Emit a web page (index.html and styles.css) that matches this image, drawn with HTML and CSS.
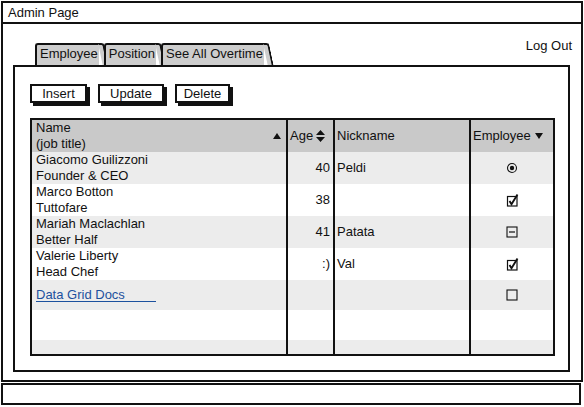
FILE: index.html
```html
<!DOCTYPE html>
<html>
<head>
<meta charset="utf-8">
<link rel="stylesheet" href="styles.css">
</head>
<body>
<div class="window">
  <div class="titlebar">Admin Page</div>
  <div class="content">
    <div class="topbar">
      <div class="tabs">
        <div class="tab">Employee</div>
        <div class="tab">Position</div>
        <div class="tab">See All Overtime</div>
      </div>
      <div class="logout">Log Out</div>
    </div>
    <div class="panel">
      <div class="buttons">
        <button class="btn btn-insert">Insert</button>
        <button class="btn btn-update">Update</button>
        <button class="btn btn-delete">Delete</button>
      </div>
      <div class="grid">
        <div class="row head">
          <div class="cell c-name head-name">
            <span>Name<br>(job title)</span>
            <svg class="tri" width="8" height="6" viewBox="0 0 8 6"><path d="M0 6L4 0L8 6Z"/></svg>
          </div>
          <div class="cell c-age head-age">
            <span>Age</span>
            <svg class="tri" width="9" height="12" viewBox="0 0 9 12"><path d="M0 5L4.5 0L9 5Z M0 7L9 7L4.5 12Z"/></svg>
          </div>
          <div class="cell c-nick head-plain">Nickname</div>
          <div class="cell c-emp head-emp">
            <span>Employee</span>
            <svg class="tri" width="8" height="6" viewBox="0 0 8 6"><path d="M0 0L8 0L4 6Z"/></svg>
          </div>
        </div>
        <div class="row alt">
          <div class="cell c-name">Giacomo Guilizzoni<br>Founder &amp; CEO</div>
          <div class="cell c-age num">40</div>
          <div class="cell c-nick nick">Peldi</div>
          <div class="cell c-emp ico">
            <svg width="12" height="12" viewBox="0 0 12 12"><circle cx="6" cy="6" r="4.5" fill="none" stroke="#111" stroke-width="1.1"/><circle cx="6" cy="6" r="2.2" fill="#111"/></svg>
          </div>
        </div>
        <div class="row">
          <div class="cell c-name">Marco Botton<br>Tuttofare</div>
          <div class="cell c-age num">38</div>
          <div class="cell c-nick nick"></div>
          <div class="cell c-emp ico">
            <svg width="13" height="13" viewBox="0 0 13 13"><rect x="1.5" y="2.5" width="9.5" height="9.5" fill="none" stroke="#111" stroke-width="1.2"/><path d="M3.5 7L5.5 10.2L11.5 0.5" fill="none" stroke="#111" stroke-width="1.9"/></svg>
          </div>
        </div>
        <div class="row alt">
          <div class="cell c-name">Mariah Maclachlan<br>Better Half</div>
          <div class="cell c-age num">41</div>
          <div class="cell c-nick nick">Patata</div>
          <div class="cell c-emp ico">
            <svg width="12" height="12" viewBox="0 0 12 12"><rect x="1" y="1" width="10" height="10" fill="none" stroke="#111" stroke-width="1.1"/><path d="M3 6H9" stroke="#111" stroke-width="1.2"/></svg>
          </div>
        </div>
        <div class="row">
          <div class="cell c-name">Valerie Liberty<br>Head Chef</div>
          <div class="cell c-age num">:)</div>
          <div class="cell c-nick nick">Val</div>
          <div class="cell c-emp ico">
            <svg width="13" height="13" viewBox="0 0 13 13"><rect x="1.5" y="2.5" width="9.5" height="9.5" fill="none" stroke="#111" stroke-width="1.2"/><path d="M3.5 7L5.5 10.2L11.5 0.5" fill="none" stroke="#111" stroke-width="1.9"/></svg>
          </div>
        </div>
        <div class="row alt short">
          <div class="cell c-name"><a class="link" href="#">Data Grid Docs</a></div>
          <div class="cell c-age"></div>
          <div class="cell c-nick"></div>
          <div class="cell c-emp ico">
            <svg width="12" height="12" viewBox="0 0 12 12"><rect x="1" y="1" width="10" height="10" fill="none" stroke="#111" stroke-width="1.1"/></svg>
          </div>
        </div>
        <div class="row short">
          <div class="cell c-name"></div>
          <div class="cell c-age"></div>
          <div class="cell c-nick"></div>
          <div class="cell c-emp"></div>
        </div>
        <div class="row alt short">
          <div class="cell c-name"></div>
          <div class="cell c-age"></div>
          <div class="cell c-nick"></div>
          <div class="cell c-emp"></div>
        </div>
      </div>
    </div>
  </div>
</div>
<div class="statusbar"></div>
</body>
</html>
```
FILE: styles.css
```css
* { box-sizing: border-box; }
body {
  margin: 0;
  font-family: "Liberation Sans", Arial, sans-serif;
  font-size: 13px;
  color: #111;
  background: #fff;
}
.window {
  margin: 1px 0 0 1px;
  width: 582px;
  height: 381px;
  border: 2px solid #111;
}
.titlebar {
  height: 21px;
  line-height: 19px;
  padding-left: 5px;
  border-bottom: 2px solid #111;
}
.content {
  padding: 14px 9px 0 10px;
}
.topbar {
  display: flex;
  justify-content: space-between;
  align-items: flex-start;
  height: 27px;
}
.tabs {
  display: flex;
  margin: 5px 0 0 22px;
}
.tab {
  position: relative;
  height: 22px;
  padding: 0 1px 0 3px;
  line-height: 18px;
  background: #cdcdcd;
  border-top: 2px solid #111;
  border-left: 2px solid #111;
  border-top-left-radius: 3px;
  margin-right: 5px;
}
.tab::after {
  content: "";
  position: absolute;
  top: -2px;
  bottom: 0;
  left: 100%;
  margin-left: -1px;
  width: 4px;
  background: #cdcdcd;
  border-top: 2px solid #111;
  border-right: 2px solid #111;
  border-top-right-radius: 3px;
  transform: skewX(12deg);
  transform-origin: top left;
}
.logout {
  line-height: 15px;
}
.panel {
  height: 307px;
  margin-right: 2px;
  border: 2px solid #111;
  padding: 17px 0 0 15px;
}
.buttons {
  display: flex;
  gap: 11px;
}
.btn {
  height: 19px;
  line-height: 15px;
  padding: 0;
  border: 2px solid #111;
  border-radius: 0;
  background: #fff;
  box-shadow: 3px 3px 0 #111;
  font: inherit;
  color: inherit;
  text-align: center;
}
.btn-insert { width: 57px; }
.btn-update { width: 66px; }
.btn-delete { width: 55px; }
.grid {
  margin-top: 15px;
  width: 525px;
  height: 238px;
  border: 2px solid #111;
  overflow: hidden;
}
.row {
  display: flex;
  height: 32px;
}
.row.short { height: 30px; }
.row.alt { background: #ececec; }
.row.head { background: #c9c9c9; }
.cell {
  flex: none;
  line-height: 16px;
}
.c-name { width: 254px; padding-left: 4px; }
.c-age { width: 47px; border-left: 2px solid #111; }
.c-nick { width: 136px; border-left: 2px solid #111; }
.c-emp { width: 84px; border-left: 2px solid #111; }
.tri { fill: #111; flex: none; }
.head-name {
  display: flex;
  align-items: center;
  justify-content: space-between;
  padding-right: 5px;
}
.head-age {
  display: flex;
  align-items: center;
  gap: 3px;
  padding-left: 2px;
}
.head-plain {
  display: flex;
  align-items: center;
  padding-left: 2px;
}
.head-emp {
  display: flex;
  align-items: center;
  gap: 4px;
  padding-left: 2px;
}
.num {
  display: flex;
  align-items: center;
  justify-content: flex-end;
  padding-right: 3px;
}
.nick {
  display: flex;
  align-items: center;
  padding-left: 2px;
}
.ico {
  display: flex;
  align-items: center;
  justify-content: center;
}
.link {
  display: inline-block;
  margin-top: 8px;
  width: 120px;
  line-height: 13px;
  color: #1c519e;
  text-decoration: none;
  border-bottom: 1.5px solid #1c519e;
}
.statusbar {
  margin: 1px 0 0 1px;
  width: 580px;
  height: 22px;
  border: 2px solid #111;
}
```
